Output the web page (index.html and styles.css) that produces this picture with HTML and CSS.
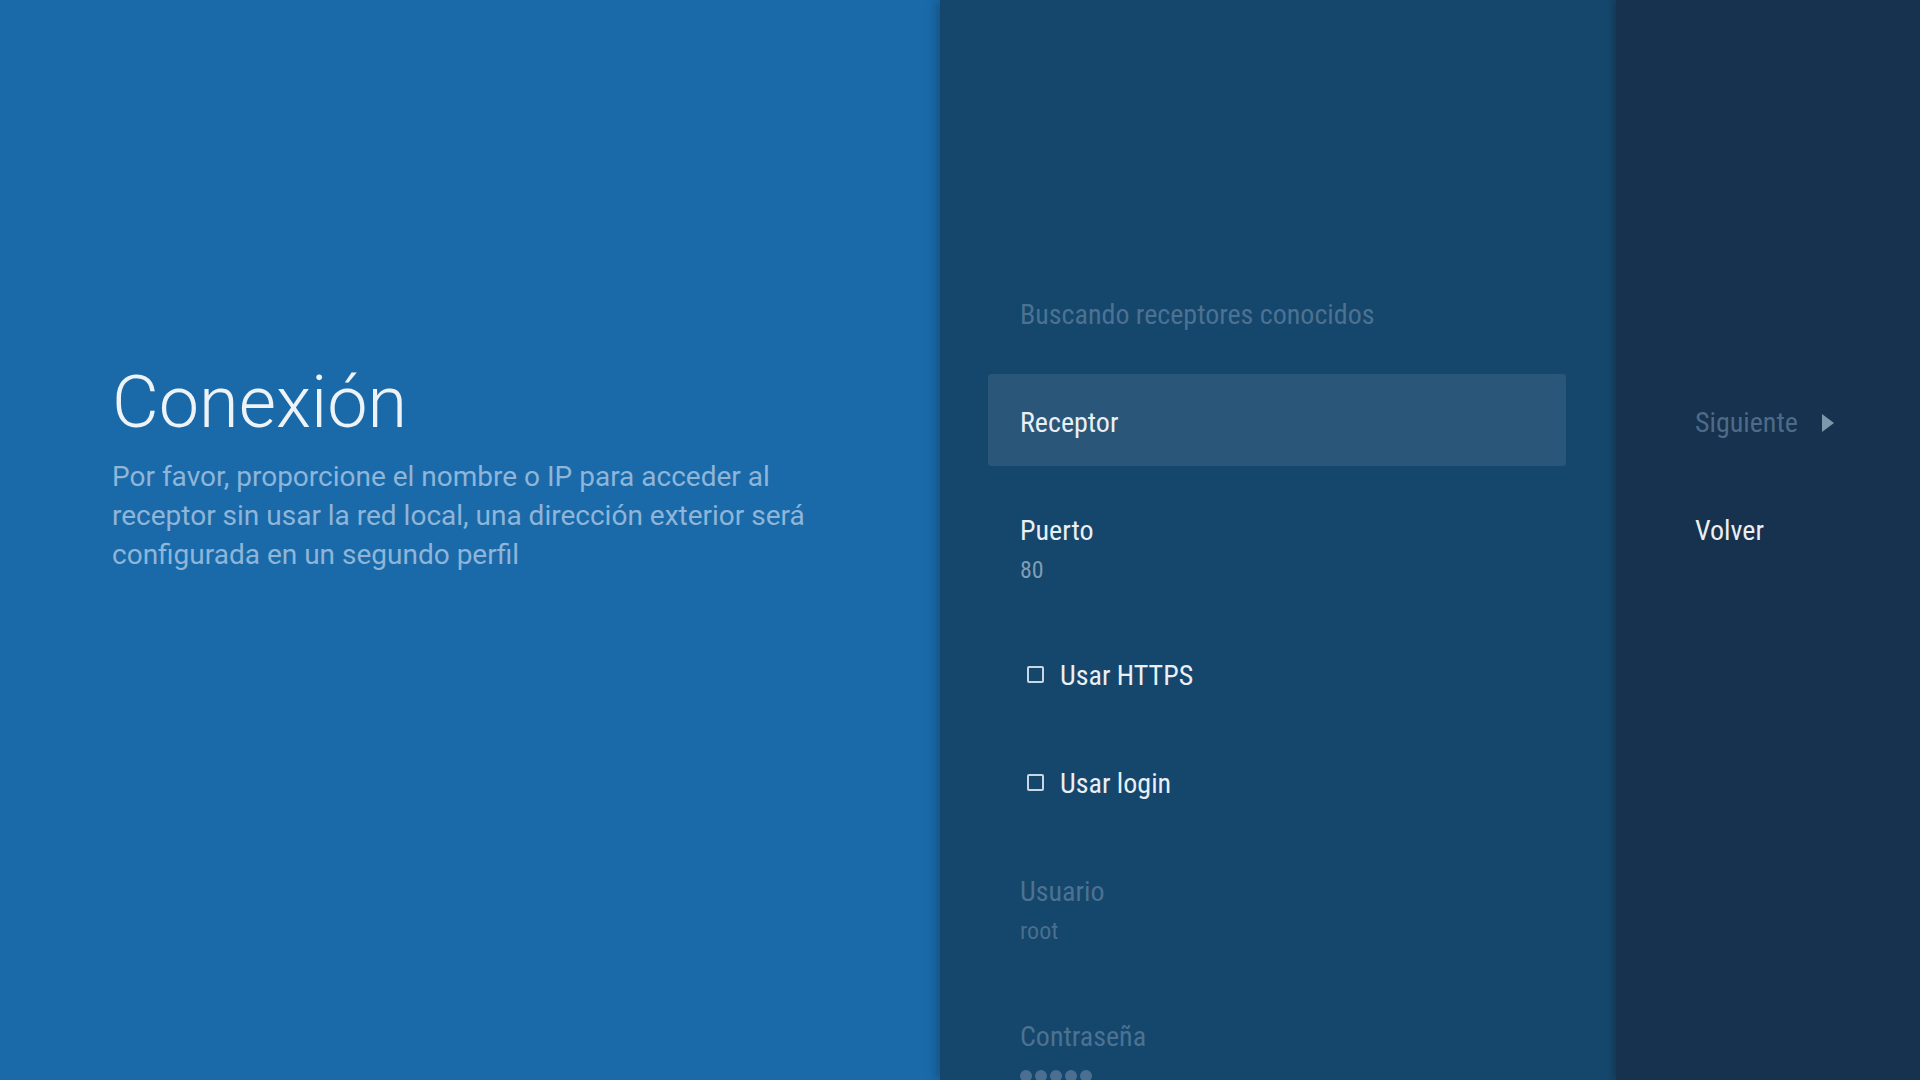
FILE: index.html
```html
<!DOCTYPE html>
<html lang="es">
<head>
<meta charset="utf-8">
<title>Conexión</title>
<link rel="stylesheet" href="styles.css">
</head>
<body>
<div class="screen">
  <section class="guidance">
    <h1 class="guidance-title">Conexión</h1>
    <p class="guidance-desc">Por favor, proporcione el nombre o IP para acceder al receptor sin usar la red local, una dirección exterior será configurada en un segundo perfil</p>
  </section>

  <section class="actions">
    <ul class="action-list">
      <li class="action is-disabled">
        <div class="action-title">Buscando receptores conocidos</div>
      </li>
      <li class="action is-focused">
        <div class="action-title">Receptor</div>
      </li>
      <li class="action">
        <div class="action-title">Puerto</div>
        <div class="action-desc">80</div>
      </li>
      <li class="action">
        <div class="action-title check-row"><span class="checkbox"></span>Usar HTTPS</div>
      </li>
      <li class="action">
        <div class="action-title check-row"><span class="checkbox"></span>Usar login</div>
      </li>
      <li class="action is-disabled">
        <div class="action-title">Usuario</div>
        <div class="action-desc">root</div>
      </li>
      <li class="action is-disabled">
        <div class="action-title">Contraseña</div>
        <div class="action-desc password"><span class="dot"></span><span class="dot"></span><span class="dot"></span><span class="dot"></span><span class="dot"></span></div>
      </li>
    </ul>
  </section>

  <section class="buttons">
    <ul class="button-list">
      <li class="button is-disabled">
        <span class="button-title">Siguiente</span>
        <svg class="chevron" width="12" height="18" viewBox="0 0 12 18" aria-hidden="true"><polygon points="0,0 12,9 0,18" /></svg>
      </li>
      <li class="button">
        <span class="button-title">Volver</span>
      </li>
    </ul>
  </section>
</div>
</body>
</html>
```

FILE: styles.css
```css
* {
  box-sizing: border-box;
}

html, body {
  margin: 0;
  padding: 0;
  width: 1920px;
  height: 1080px;
  overflow: hidden;
  background: #16324e;
}

.screen {
  display: flex;
  width: 1920px;
  height: 1080px;
  overflow: hidden;
  font-family: "Roboto", "Liberation Sans", sans-serif;
}

/* ---- guidance (left) ---- */
.guidance {
  width: 940px;
  flex: none;
  background: #1a6aaa;
  padding: 361px 0 0 112px;
}

.guidance-title {
  margin: 0;
  font-family: "Roboto", sans-serif;
  font-weight: 300;
  font-size: 72px;
  line-height: 84px;
  color: #eef3f8;
}

.guidance-desc {
  margin: 12px 0 0;
  width: 730px;
  font-family: "Roboto", sans-serif;
  font-weight: 400;
  font-size: 28px;
  line-height: 39px;
  color: #8fb5d8;
}

/* ---- actions (middle) ---- */
.actions {
  width: 676px;
  flex: none;
  background: #15466b;
  position: relative;
  z-index: 1;
  box-shadow: -4px 0 10px rgba(0, 0, 0, 0.22);
}

.action-list,
.button-list {
  list-style: none;
  margin: 0;
}

.action-list {
  padding: 266px 50px 0 48px;
}

.action {
  padding: 33px 32px 27px;
  margin-bottom: 16px;
  border-radius: 3px;
  font-family: "Roboto Condensed", "Roboto", sans-serif;
  font-stretch: condensed;
}

.action.is-focused {
  background: #2a5679;
}

.action-title {
  font-size: 28px;
  line-height: 32px;
  color: #e9eff5;
  white-space: nowrap;
}

.action-desc {
  margin-top: 9px;
  font-size: 24px;
  line-height: 28px;
  color: #7f9db7;
}

.action.is-disabled .action-title {
  color: #4b7293;
}

.action.is-disabled .action-desc {
  color: #4a6e8e;
}

.check-row {
  display: flex;
  align-items: center;
}

.checkbox {
  width: 17px;
  height: 17px;
  margin: 0 16px 3px 7px;
  border: 2px solid #c9d7e4;
  border-radius: 2px;
  flex: none;
}

.password {
  display: flex;
  align-items: center;
  gap: 3px;
  height: 28px;
}

.dot {
  width: 12px;
  height: 12px;
  border-radius: 50%;
  background: #4a6f90;
}

/* ---- buttons (right) ---- */
.buttons {
  flex: 1;
  background: #16324e;
  position: relative;
  z-index: 2;
  box-shadow: -3px 0 6px rgba(0, 0, 0, 0.2);
}

.button-list {
  padding: 375px 0 0 79px;
}

.button {
  display: flex;
  align-items: center;
  padding: 32px 0 28px;
  margin-bottom: 16px;
  font-family: "Roboto Condensed", "Roboto", sans-serif;
  font-stretch: condensed;
}

.button-title {
  font-size: 28px;
  line-height: 32px;
  color: #e9eff5;
}

.button.is-disabled .button-title {
  color: #4d6b88;
}

.chevron {
  margin-left: 24px;
  fill: #7d97ad;
}
```
